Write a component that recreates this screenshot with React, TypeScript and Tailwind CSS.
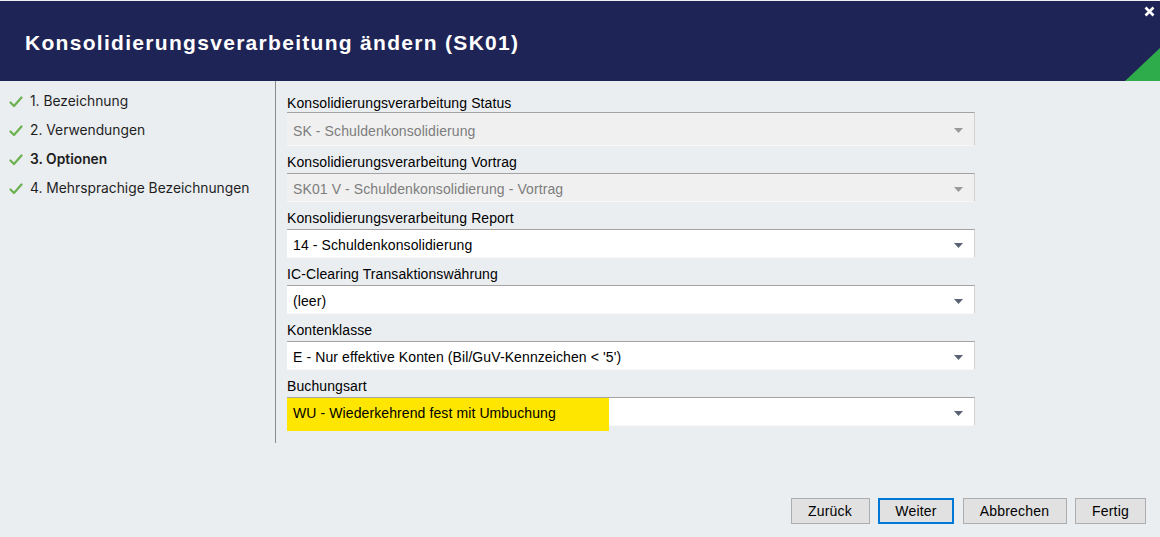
import React from "react";

const arial = { fontFamily: '"Liberation Sans", Arial, sans-serif' };
const inter = { fontFamily: 'Inter, "Noto Sans", sans-serif' };

function Check() {
  return (
    <svg width="14" height="12" viewBox="0 0 14 12" className="shrink-0">
      <polyline points="1.5,6.5 5,10 12.5,1.5" fill="none" stroke="#6cb14f" strokeWidth="2.2" strokeLinecap="round" strokeLinejoin="round" />
    </svg>
  );
}

function Arrow({ disabled }: { disabled?: boolean }) {
  return (
    <svg width="9" height="5" viewBox="0 0 9 5" className="shrink-0">
      <polygon points="0,0 9,0 4.5,5" fill={disabled ? "#9a9a9a" : "#5b6276"} />
    </svg>
  );
}

type FieldProps = {
  label: string;
  value: string;
  disabled?: boolean;
  first?: boolean;
  highlight?: boolean;
};

function Field({ label, value, disabled, first, highlight }: FieldProps) {
  return (
    <div className="flex flex-col w-[688px]">
      <div className={`h-[27px] text-[14px] leading-[16px] tracking-[0.1px] text-black ${first ? "pt-[10px]" : "pt-[8px]"}`} style={arial}>
        {label}
      </div>
      <div
        className={`relative flex items-center justify-between border-t border-t-[#a3a3a3] border-r border-r-[#d2d2d2] border-b border-b-[#f8f8f8] pl-[6px] pr-[11px] pt-[3px] ${
          first ? "h-[34px]" : "h-[29px]"
        } ${disabled ? "bg-[#f0f0f0]" : "bg-white"}`}
      >
        {highlight && <div className="absolute left-0 top-0 w-[322px] h-[33px] bg-[#ffe600]" />}
        <span
          className={`relative text-[14px] leading-[16px] tracking-[0.1px] ${disabled ? "text-[#7d7d7d]" : "text-black"}`}
          style={arial}
        >
          {value}
        </span>
        <Arrow disabled={disabled} />
      </div>
    </div>
  );
}

export default function App() {
  const steps = [
    { t: "1. Bezeichnung", b: false },
    { t: "2. Verwendungen", b: false },
    { t: "3. Optionen", b: true },
    { t: "4. Mehrsprachige Bezeichnungen", b: false },
  ];
  const buttons = [
    { t: "Zurück", w: "w-[79px]", active: false },
    { t: "Weiter", w: "w-[76px]", active: true },
    { t: "Abbrechen", w: "w-[104px]", active: false },
    { t: "Fertig", w: "w-[71px]", active: false },
  ];
  return (
    <div className="w-[1160px] h-[537px] flex flex-col bg-[#ebeef1] overflow-hidden">
      <div className="h-[1px] bg-[#eef0f2]" />
      <div className="relative h-[80px] bg-[#1f2456] flex items-center pl-[25px] pt-[4px]">
        <h1 className="text-white text-[21px] font-bold tracking-[1.3px]" style={arial}>
          Konsolidierungsverarbeitung ändern (SK01)
        </h1>
        <svg className="absolute right-[5px] top-[5px]" width="11" height="11" viewBox="0 0 11 11">
          <path d="M1.5 1.5 L9.5 9.5 M9.5 1.5 L1.5 9.5" stroke="white" strokeWidth="2.6" />
        </svg>
        <svg className="absolute right-0 bottom-0" width="35" height="33" viewBox="0 0 35 33">
          <polygon points="0,33 35,33 35,0" fill="#2eab4a" />
        </svg>
      </div>
      <div className="flex h-[362px]">
        <div className="w-[276px] border-r border-r-[#8c8c8c] pt-[6px] flex flex-col">
          {steps.map((s) => (
            <div key={s.t} className="h-[29px] flex items-center gap-[7px] pl-[9px]">
              <Check />
              <span className={`text-[13.8px] text-[#1e1e1e] ${s.b ? "font-semibold" : ""}`} style={inter}>
                {s.t}
              </span>
            </div>
          ))}
        </div>
        <div className="pl-[11px] pt-[4px] flex flex-col">
          <Field first disabled label="Konsolidierungsverarbeitung Status" value="SK - Schuldenkonsolidierung" />
          <Field disabled label="Konsolidierungsverarbeitung Vortrag" value="SK01 V - Schuldenkonsolidierung - Vortrag" />
          <Field label="Konsolidierungsverarbeitung Report" value="14 - Schuldenkonsolidierung" />
          <Field label="IC-Clearing Transaktionswährung" value="(leer)" />
          <Field label="Kontenklasse" value="E - Nur effektive Konten (Bil/GuV-Kennzeichen < '5')" />
          <Field highlight label="Buchungsart" value="WU - Wiederkehrend fest mit Umbuchung" />
        </div>
      </div>
      <div className="flex justify-end pt-[55px] pr-[14px] gap-[8.5px]">
        {buttons.map((b) => (
          <button
            key={b.t}
            className={`${b.w} h-[26px] bg-[#e1e1e1] text-[14px] tracking-[0.2px] text-black pt-[1px] ${
              b.active ? "border-2 border-[#0078d7]" : "border border-[#adadad]"
            }`}
            style={arial}
          >
            {b.t}
          </button>
        ))}
      </div>
    </div>
  );
}
